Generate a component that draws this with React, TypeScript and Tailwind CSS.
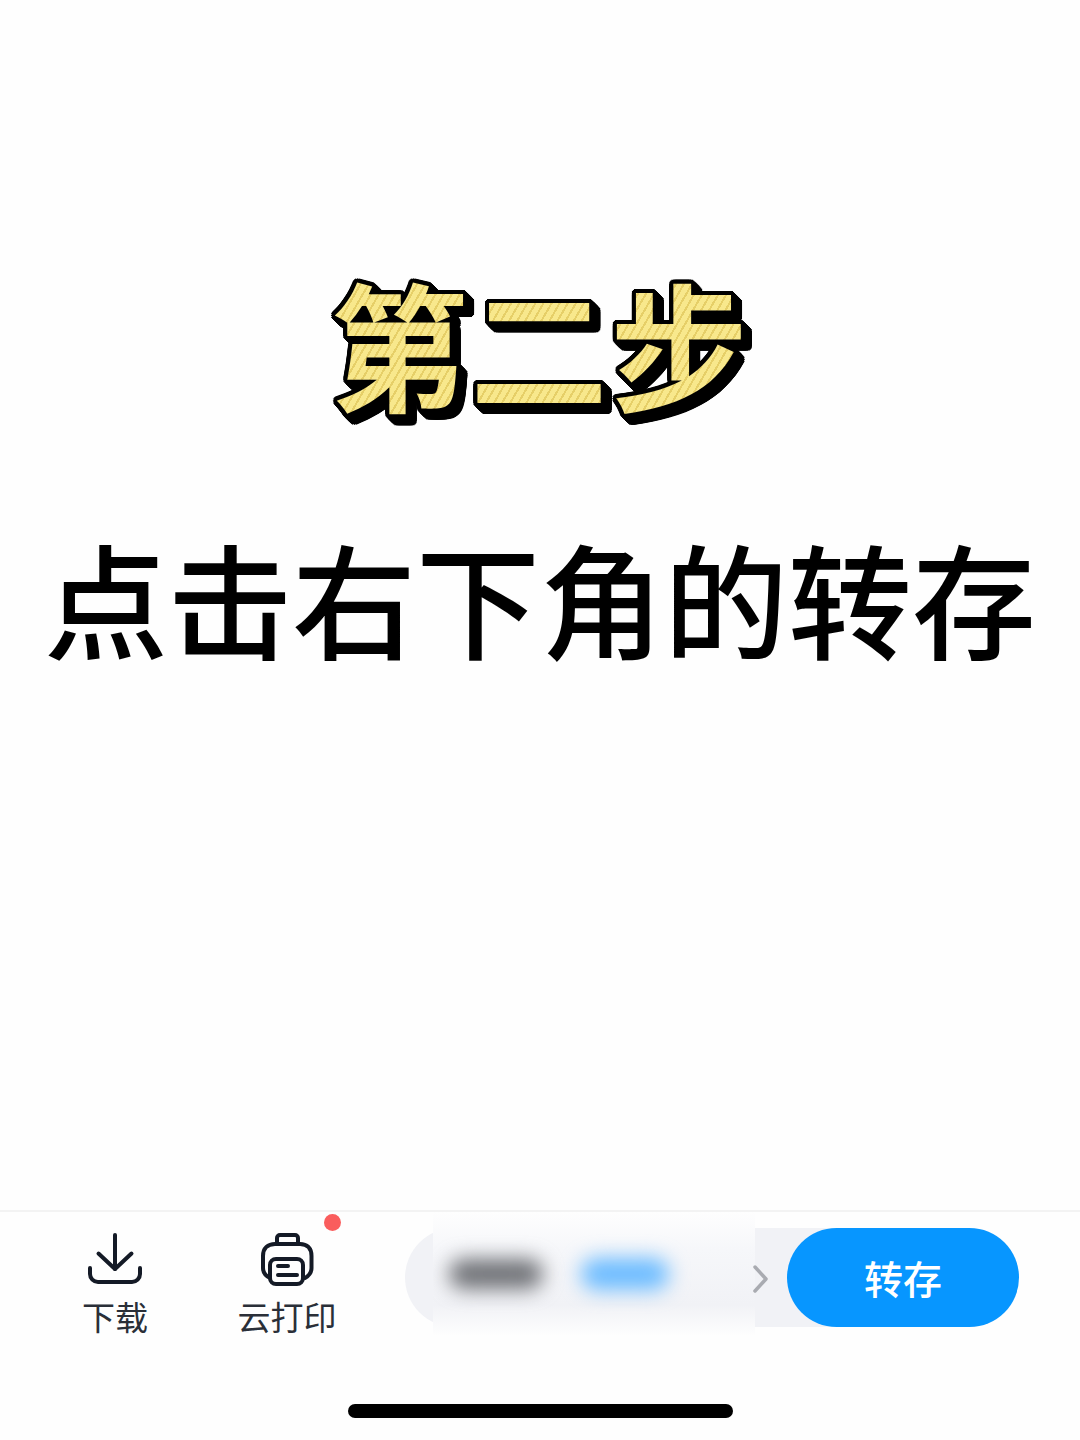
const cjk = "font-['Noto_Sans_CJK_SC','Noto_Sans',sans-serif]";

function Title() {
  // outline and drop are stacked drop-shadows so the hatch stays on top
  return (
    <div className="text-[138px] leading-[160px] font-bold tracking-[2px] whitespace-nowrap [filter:drop-shadow(2px_0_0_#000)_drop-shadow(-2px_0_0_#000)_drop-shadow(0_2px_0_#000)_drop-shadow(0_-2px_0_#000)_drop-shadow(1px_1px_0_#000)_drop-shadow(-1px_-1px_0_#000)_drop-shadow(1px_-1px_0_#000)_drop-shadow(-1px_1px_0_#000)_drop-shadow(2px_2px_0_#000)_drop-shadow(3px_3px_0_#000)_drop-shadow(2px_2px_0_#000)]">
      <span className="text-transparent bg-clip-text bg-[repeating-linear-gradient(120deg,#f8e88c_0px,#f8e88c_5px,#e6cf68_5px,#e6cf68_7px)]">
        第二步
      </span>
    </div>
  );
}

function DownloadIcon() {
  return (
    <svg width="56" height="56" viewBox="0 0 56 56" fill="none" stroke="#141a26" strokeWidth="4" strokeLinecap="round" strokeLinejoin="round">
      <path d="M28 3v34" />
      <path d="M11.500 21.500 28 37l16.500-15.500" />
      <path d="M3 36v6a8 8 0 0 0 8 8h34a8 8 0 0 0 8-8v-6" />
    </svg>
  );
}

function PrinterIcon() {
  return (
    <svg width="56" height="56" viewBox="0 0 56 56" fill="none" stroke="#141a26" strokeWidth="4" strokeLinecap="round" strokeLinejoin="round">
      <path d="M18 12V6a3 3 0 0 1 3-3h15a3 3 0 0 1 3 3v6" />
      <path d="M11 46C7 44 4 41 4 36V24C4 16 9 12 16 12h25c7 0 11.500 4 11.500 12v12c0 5-3 8-6.500 10" />
      <rect x="11" y="27" width="33" height="25" rx="6" />
      <path d="M19 34h10M19 43h19" />
    </svg>
  );
}

export default function App() {
  return (
    <div className={`relative flex h-[1440px] w-[1080px] flex-col items-center overflow-hidden bg-[#fefefe] text-black ${cjk}`}>
      <div className="mt-[261px]">
        <Title />
      </div>
      <div className="mt-[95px] text-[124px] leading-[160px] font-medium whitespace-nowrap">点击右下角的转存</div>

      <div className="mt-auto w-full border-t-2 border-[#f3f3f3]">
        <div className="relative flex h-[131px] items-start">
          <div className="ml-[80px] flex w-[70px] flex-col items-center pt-[20px]">
            <DownloadIcon />
            <span className="mt-[8px] text-[33px] leading-[40px] text-[#2a2f38] whitespace-nowrap">下载</span>
          </div>
          <div className="relative ml-[87px] flex w-[100px] flex-col items-center pt-[20px]">
            <PrinterIcon />
            <span className="mt-[8px] text-[33px] leading-[40px] text-[#2a2f38] whitespace-nowrap">云打印</span>
            <span className="absolute left-[87px] top-[2px] h-[17px] w-[17px] rounded-full bg-[#fa5d5d]" />
          </div>

          <div className="ml-[68px] mt-[16px] flex h-[99px] w-[614px] items-center justify-end rounded-full bg-[#f1f2f6]">
            <button className="flex h-[99px] w-[232px] items-center justify-center rounded-full bg-[#0796ff] text-[39px] font-medium text-white">
              转存
            </button>
          </div>

          <div className="absolute left-[433px] top-0 flex h-[124px] w-[322px] items-center overflow-hidden bg-[linear-gradient(180deg,#fefefe_0%,#f6f7fa_30%,#f1f2f6_75%,#fefefe_100%)]">
            <div className="ml-[16px] h-[30px] w-[94px] rounded-full bg-[#6f7176] blur-[10px]" />
            <div className="ml-[38px] h-[32px] w-[88px] rounded-full bg-[#6dbcff] blur-[10px]" />
          </div>

          <svg className="absolute left-[752px] top-[52px]" width="18" height="30" viewBox="0 0 18 30" fill="none" stroke="#a9abb1" strokeWidth="3.500" strokeLinecap="round" strokeLinejoin="round">
            <path d="M3 3l11 12L3 27" />
          </svg>
        </div>
        <div className="flex h-[97px] justify-center pt-[61px]">
          <div className="h-[14px] w-[385px] rounded-full bg-black" />
        </div>
      </div>
    </div>
  );
}
